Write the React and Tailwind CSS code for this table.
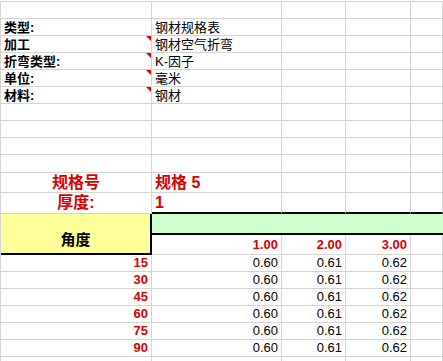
import React from "react";

const G = "border-r border-b border-[#d4d4d4]";

function Cell({ className = "", border = G, children, tri }) {
  return (
    <div className={`relative flex items-center overflow-visible whitespace-nowrap ${border} ${className}`}>
      {children}
      {tri && (
        <span className="absolute top-0 right-0 w-0 h-0 border-t-[5px] border-l-[5px] border-t-[#e00000] border-l-transparent" />
      )}
    </div>
  );
}

const labels = [
  ["类型:", "钢材规格表", false],
  ["加工", "钢材空气折弯", true],
  ["折弯类型:", "K-因子", true],
  ["单位:", "毫米", true],
  ["材料:", "钢材", true],
];

function EmptyRow() {
  return (
    <>
      <Cell />
      <Cell />
      <Cell />
      <Cell />
      <Cell />
    </>
  );
}

export default function App() {
  const data = [15, 30, 45, 60, 75, 90];
  return (
    <div
      className="w-[443px] h-[361px] overflow-hidden bg-white text-black"
      style={{ fontFamily: '"Liberation Sans", "Noto Sans CJK SC", sans-serif' }}
    >
      <div className="mt-px grid grid-cols-[151px_130px_64px_65px_1fr] grid-rows-[17px_17px_17px_17px_17px_17px_17px_17px_17px_18px_20px_21px_21px_20px_17px_17px_17px_17px_17px_17px_17px] border-l border-t border-[#d4d4d4] text-[13px] leading-[16px]">
        <EmptyRow />
        {labels.map(([a, b, t]) => (
          <React.Fragment key={a}>
            <Cell className="pl-[3px] pt-px font-bold" tri={t}>
              {a}
            </Cell>
            <Cell className="pl-[3px] pt-px">{b}</Cell>
            <Cell />
            <Cell />
            <Cell />
          </React.Fragment>
        ))}
        <EmptyRow />
        <EmptyRow />
        <EmptyRow />
        <EmptyRow />
        {/* 规格号 */}
        <Cell className="justify-center text-[16px] font-bold text-[#dd0000]">规格号</Cell>
        <Cell className="pl-[3px] text-[16px] font-bold text-[#dd0000]">规格 5</Cell>
        <Cell />
        <Cell />
        <Cell />
        {/* 厚度 */}
        <Cell className="justify-center text-[16px] font-bold text-[#dd0000]">厚度:</Cell>
        <Cell
          className="pl-[3px] text-[16px] font-bold text-[#dd0000]"
          border="border-r border-r-[#d4d4d4] border-b-2 border-b-black"
        >
          1
        </Cell>
        <Cell border="border-r border-r-[#d4d4d4] border-b-2 border-b-black" />
        <Cell border="border-r border-r-[#d4d4d4] border-b-2 border-b-black" />
        <Cell border="border-r border-r-[#d4d4d4] border-b-2 border-b-black" />
        {/* header */}
        <Cell
          className="row-span-2 items-end justify-center pb-[5px] text-[15px] font-bold bg-[#ffff99]"
          border="border-r-2 border-r-black border-b-2 border-b-black"
        >
          角度
        </Cell>
        <Cell className="col-span-4 bg-[#ccffcc]" border="border-b-2 border-b-black" />
        <Cell className="justify-end pr-[3px] font-bold text-[#dd0000]">1.00</Cell>
        <Cell className="justify-end pr-[3px] font-bold text-[#dd0000]">2.00</Cell>
        <Cell className="justify-end pr-[3px] font-bold text-[#dd0000]">3.00</Cell>
        <Cell />
        {data.map((d) => (
          <React.Fragment key={d}>
            <Cell className="justify-end pr-[3px] font-bold text-[#dd0000]">{d}</Cell>
            <Cell className="justify-end pr-[3px]">0.60</Cell>
            <Cell className="justify-end pr-[3px]">0.61</Cell>
            <Cell className="justify-end pr-[3px]">0.62</Cell>
            <Cell />
          </React.Fragment>
        ))}
        <EmptyRow />
      </div>
    </div>
  );
}
